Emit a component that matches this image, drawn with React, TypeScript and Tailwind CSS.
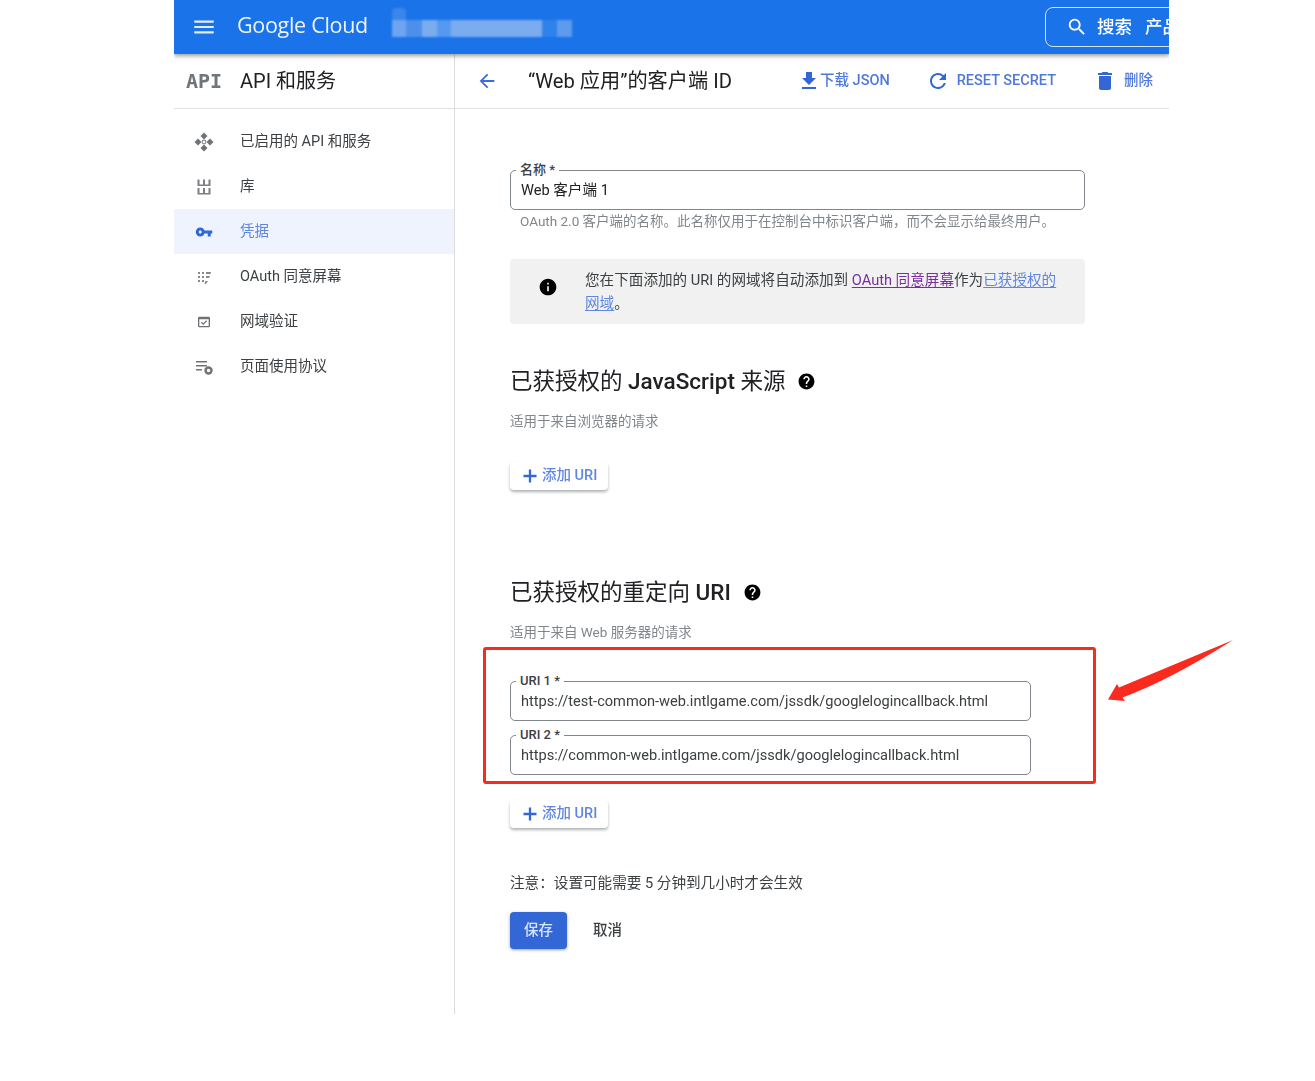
import { MdMenu, MdSearch, MdArrowBack, MdFileDownload, MdRefresh, MdDelete, MdVpnKey, MdInfo, MdHelp, MdOutlineDomainVerification } from "react-icons/md";

const FONT = "font-['Roboto','Noto_Sans_CJK_SC',sans-serif]";

function EnabledIcon() {
  return (
    <svg width="20" height="20" viewBox="0 0 20 20" fill="#6f7377">
      <path d="M10 .5l3.500 3.500L10 7.500 6.500 4zM10 12.500l3.500 3.500-3.500 3.500L6.500 16zM4 6.500L7.500 10 4 13.500.5 10zM16 6.500l3.500 3.500-3.500 3.500-3.500-3.500z" />
      <circle cx="10" cy="10" r="1.800" fill="none" stroke="#8a8e92" strokeWidth="1.200" />
    </svg>
  );
}

function LibraryIcon() {
  return (
    <svg width="20" height="20" viewBox="0 0 20 20" fill="#7b7f83">
      <path d="M3.500 2.500h2v5h-2zM9 2.500h2v5H9zM14.500 2.500h2v5h-2zM3.500 7.500h13V9h-13zM3.500 11h2v5h-2zM9 11h2v5H9zM14.500 11h2v5h-2zM3.500 16h13v1.500h-13z" />
    </svg>
  );
}

function ConsentIcon() {
  return (
    <svg width="20" height="20" viewBox="0 0 20 20" fill="#85898d">
      <path d="M4 5h2v2H4zM8 5h2v2H8zM4 9h2v2H4zM8 9h2v2H8zM4 13h2v2H4zM8 13h2v2H8zM12 5h5l-.5 2h-4.500zM12 9h4l-1 2h-3zM11.500 14h2.500l-2 3h-1.500z" />
    </svg>
  );
}

function UsageIcon() {
  return (
    <svg width="20" height="20" viewBox="0 0 20 20" fill="#6f7377">
      <path d="M2 4h11v1.500H2zM2 8h11v1.500H2zM2 12h6v1.500H2z" />
      <circle cx="14.500" cy="13.500" r="3" fill="none" stroke="#6f7377" strokeWidth="2.400" />
    </svg>
  );
}

const NAV = [
  { label: "已启用的 API 和服务", icon: <EnabledIcon /> },
  { label: "库", icon: <LibraryIcon /> },
  { label: "凭据", icon: <MdVpnKey size={18} className="text-[#3367d6]" />, active: true },
  { label: "OAuth 同意屏幕", icon: <ConsentIcon /> },
  { label: "网域验证", icon: <MdOutlineDomainVerification size={16} className="text-[#6f7377]" /> },
  { label: "页面使用协议", icon: <UsageIcon /> },
];

function Field({ label, value, className }: { label: string; value: string; className: string }) {
  return (
    <div className={`relative h-10 rounded-[5px] border border-[#80868b] flex items-center pl-2.5 pt-[2px] text-[14.600px] text-[#3c4043] ${className}`}>
      <span className="absolute left-[5px] -top-[10px] bg-white px-1 text-[13px] leading-[18px] font-medium text-[#3c4043]">{label}</span>
      {value}
    </div>
  );
}

function AddButton({ className }: { className: string }) {
  return (
    <button className={`flex items-center h-7 w-[98px] pl-[10px] rounded bg-white text-[14.500px] font-medium text-[#5f86e0] shadow-[0_2px_3px_rgba(60,64,67,0.4)] ${className}`}>
      <svg width="20" height="20" viewBox="0 0 20 20" className="mr-[2px] shrink-0">
        <path d="M10 3.500v13M3.500 10h13" fill="none" stroke="#3367d6" strokeWidth="2.300" />
      </svg>
      <span>添加 URI</span>
    </button>
  );
}

export default function App() {
  return (
    <div className={`relative h-[1081px] w-[1315px] overflow-hidden bg-white pl-[174px] ${FONT}`}>
      <div className="w-[995px] overflow-hidden blur-[0.4px]">
        {/* Top bar */}
        <header className="relative z-10 flex h-[54px] items-center bg-[#1a73e8] shadow-[0_2px_4px_rgba(60,64,67,0.5)] text-white">
          <MdMenu size={26} className="ml-[17px] text-[#e3edfc]" />
          <span className="ml-[20px] mb-[3px] text-[21.500px] tracking-[-0.3px] font-['Open_Sans',sans-serif] text-[#eef4fe]">Google Cloud</span>
          <div className="ml-[24px] flex h-[17px] items-center self-center mt-[2px] blur-[1px]">
            <div className="relative h-[17px] w-[14px] bg-[#6fa5f0]">
              <div className="absolute bottom-full left-0 h-[12px] w-[14px] rounded-t bg-[#3a86ea]" />
            </div>
            <div className="h-[17px] w-[16px] bg-[#4d90ec]" />
            <div className="h-[17px] w-[15px] bg-[#7cacf0]" />
            <div className="h-[17px] w-[14px] bg-[#559af0]" />
            <div className="h-[17px] w-[91px] bg-[#7cacf0]" />
            <div className="h-[17px] w-[15px] bg-[#2f82ea]" />
            <div className="h-[17px] w-[15px] bg-[#5d9bee]" />
          </div>
          <div className="ml-auto mr-[-40px] flex h-10 w-[164px] shrink-0 items-center rounded-lg border border-[#d2e3fc] pl-[20px] text-[17.500px] font-medium">
            <MdSearch size={22} />
            <span className="ml-[9px] whitespace-nowrap">搜索</span>
            <span className="ml-[13px] whitespace-nowrap">产品</span>
          </div>
        </header>

        <div className="flex h-[960px]">
          {/* Sidebar */}
          <aside className="w-[281px] shrink-0 border-r border-[#dadce0]">
            <div className="flex h-[55px] items-center border-b border-[#e0e0e0] pl-[12px]">
              <span className="w-[54px] font-['DejaVu_Sans_Mono',monospace] text-[20px] font-bold text-[#70757a]">API</span>
              <span className="text-[20px] text-[#202124]">API 和服务</span>
            </div>
            <nav className="pt-[10px]">
              {NAV.map((item) => (
                <div
                  key={item.label}
                  className={`flex h-[45px] items-center pl-5 text-[14.500px] ${item.active ? "bg-[#eef3fd] text-[#5f86e0]" : "text-[#3c4043]"}`}
                >
                  <span className="flex w-5 justify-center">{item.icon}</span>
                  <span className="ml-[26px]">{item.label}</span>
                </div>
              ))}
            </nav>
          </aside>

          <main className="min-w-0 flex-1">
            {/* Toolbar */}
            <div className="flex h-[55px] items-center border-b border-[#e0e0e0] pl-[21px] pr-4 text-[14.500px] font-medium text-[#4f78dc]">
              <MdArrowBack size={22} className="text-[#3f6ad8]" />
              <span className="ml-[30px] text-[20.200px] font-normal text-[#202124]">“Web 应用”的客户端 ID</span>
              <div className="ml-auto flex items-center">
                <MdFileDownload size={24} className="text-[#3367d6]" />
                <span className="-ml-px">下载 JSON</span>
                <MdRefresh size={24} className="ml-[36px] text-[#3367d6]" />
                <span className="ml-[7px]">RESET SECRET</span>
                <MdDelete size={24} className="ml-[37px] text-[#3367d6]" />
                <span className="ml-[7px]">删除</span>
              </div>
            </div>

            {/* Form */}
            <div className="w-[630px] pl-[55px] pt-[61px]">
              <Field label="名称 *" value="Web 客户端 1" className="text-[#202124]" />
              <p className="mt-[3px] pl-2.5 whitespace-nowrap text-[13.500px] leading-4 text-[#80868b]">OAuth 2.0 客户端的名称。此名称仅用于在控制台中标识客户端，而不会显示给最终用户。</p>

              <div className="mt-[30px] flex h-[65px] rounded bg-[#f1f1f1] pl-[28px] pt-[10px] text-[14.600px] leading-[23px] text-[#3c4043]">
                <MdInfo size={20} className="mt-[8px] shrink-0 text-black" />
                <p className="ml-[27px]">
                  您在下面添加的 URI 的网域将自动添加到 <span className="text-[#7b2d9e] underline underline-offset-2">OAuth 同意屏幕</span>作为<span className="text-[#5f86e0] underline underline-offset-2">已获授权的<br />网域</span>。
                </p>
              </div>

              <h2 className="mt-[42px] flex h-[30px] items-center text-[22.500px] text-[#202124]">
                <span className="mt-[2px]">已获授权的 <span className="font-medium">JavaScript</span> 来源</span>
                <MdHelp size={19} className="ml-[12px] text-black" />
              </h2>
              <p className="mt-[15px] text-[13.500px] leading-5 text-[#80868b]">适用于来自浏览器的请求</p>
              <AddButton className="mt-[31px]" />

              <h2 className="mt-[87px] flex h-[30px] items-center text-[22.500px] text-[#202124]">
                <span className="mt-[2px]">已获授权的重定向 <span className="font-medium">URI</span></span>
                <MdHelp size={19} className="ml-[12px] text-black" />
              </h2>
              <p className="mt-[15px] text-[13.500px] leading-5 text-[#80868b]">适用于来自 Web 服务器的请求</p>

              <div className="mt-[39px] w-[521px]">
                <Field label="URI 1 *" value="https://test-common-web.intlgame.com/jssdk/googlelogincallback.html" className="" />
                <Field label="URI 2 *" value="https://common-web.intlgame.com/jssdk/googlelogincallback.html" className="mt-[14px]" />
              </div>
              <AddButton className="mt-[25px]" />

              <p className="mt-[45px] text-[14.600px] leading-5 text-[#3c4043]">注意：设置可能需要 5 分钟到几小时才会生效</p>
              <div className="mt-[19px] flex items-center">
                <button className="h-[37px] w-[57px] rounded bg-[#3367d6] text-[14.500px] font-medium text-[#dbe5fa] shadow-[0_1px_3px_rgba(60,64,67,0.5)]">保存</button>
                <button className="ml-[26px] text-[14.500px] font-medium text-[#3c4043]">取消</button>
              </div>
            </div>
          </main>
        </div>
      </div>

      {/* red annotations drawn over the screenshot */}
      <div className="absolute left-[483px] top-[647px] h-[137px] w-[613px] rounded-[3px] border-[3px] border-[#fa2a1e]" />
      <svg className="absolute left-[1100px] top-[632px]" width="140" height="76" viewBox="0 0 140 76">
        <path d="M133 8L19 55.500L17 52L8 67.500L25 69L22.500 65.500Q70 48 133 8z" fill="#fa2a1e" />
      </svg>
    </div>
  );
}
